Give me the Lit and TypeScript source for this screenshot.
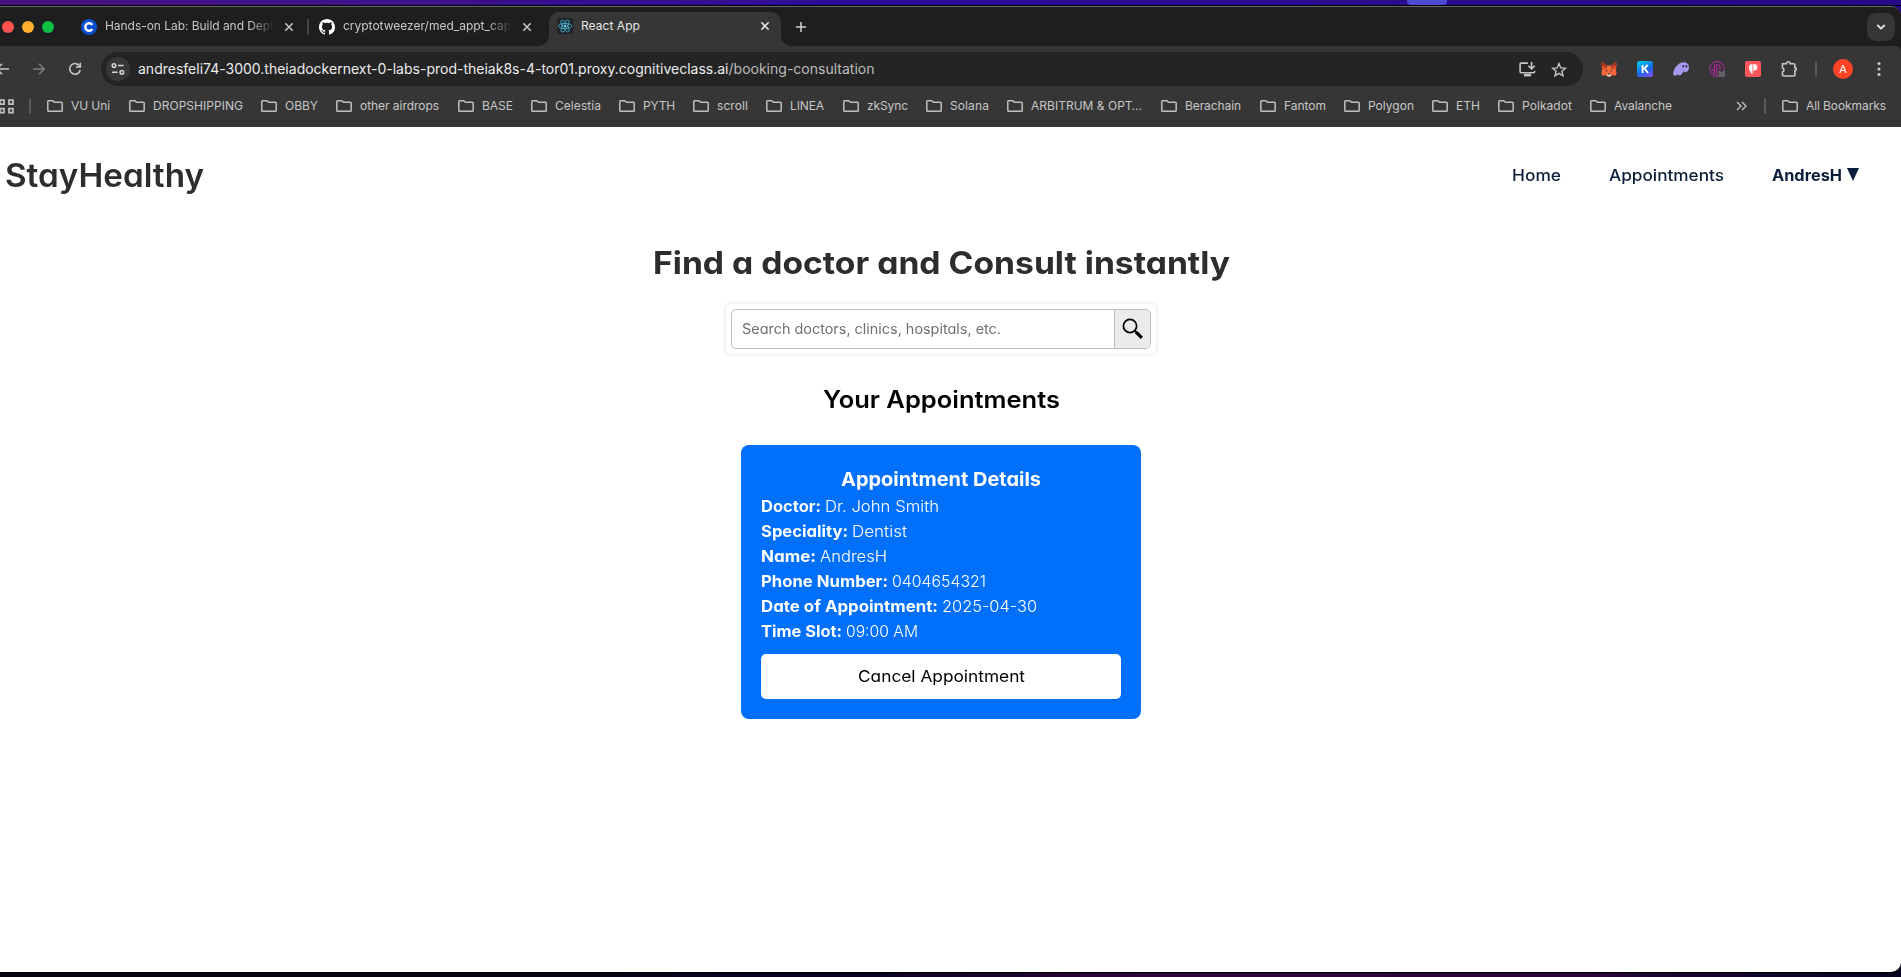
import { LitElement, html, css } from "lit";
import { customElement, property } from "lit/decorators.js";

/** One line of text fitted to an exact width, by tracking or by widening its letters. */
@customElement("fit-text")
class FitText extends LitElement {
  @property({ type: Number }) w = 0;
  @property() text = "";
  @property({ type: Boolean }) stretch = false;
  static styles = css`
    :host { display: inline-block; white-space: pre; flex: none; text-align: left; }
    span { display: inline-block; transform-origin: 0 50%; }
  `;
  render() {
    return html`<span>${this.text}</span>`;
  }
  updated() {
    const span = this.renderRoot.querySelector("span") as HTMLElement;
    span.style.letterSpacing = "0";
    span.style.transform = "none";
    const natural = span.getBoundingClientRect().width;
    const n = [...this.text].length;
    if (this.stretch && natural) span.style.transform = `scaleX(${this.w / natural})`;
    else if (n) span.style.letterSpacing = `${(this.w - natural) / n}px`;
    this.style.width = `${this.w}px`;
  }
}

const t = (text: string, w: number) => html`<fit-text .w=${w} .text=${text}></fit-text>`;
const wide = (text: string, w: number) => html`<fit-text .w=${w} .text=${text} .stretch=${true}></fit-text>`;

const folder = html`<svg class="folder" width="16" height="12" viewBox="0 0 16 12" fill="none">
  <path d="M.8 1.2v9.2q0 .8.8.8h12.8q.8 0 .8-.8V3q0-.8-.8-.8H7.4L5.9.8H1.6Q.8.8.8 1.6z" stroke="#c0c0c0" stroke-width="1.5"/></svg>`;

const cross = (c: string) => html`<svg class="cross" width="10" height="10" viewBox="0 0 10 10">
  <path d="M1.3 1.3l7.4 7.4M8.7 1.3L1.3 8.7" stroke=${c} stroke-width="1.6"/></svg>`;

const bookmarks: [string, number, number][] = [
  ["VU Uni", 39, 82], ["DROPSHIPPING", 90, 132], ["OBBY", 33, 75], ["other airdrops", 79, 122],
  ["BASE", 31, 73], ["Celestia", 46, 88], ["PYTH", 32, 74], ["scroll", 31, 73], ["LINEA", 34, 77],
  ["zkSync", 41, 83], ["Solana", 39, 81], ["ARBITRUM & OPT…", 111, 154], ["Berachain", 56, 99],
  ["Fantom", 42, 84], ["Polygon", 46, 88], ["ETH", 24, 66], ["Polkadot", 50, 92], ["Avalanche", 58, 82],
];

@customElement("browser-chrome")
class BrowserChrome extends LitElement {
  static styles = css`
    :host { display: block; font-family: Inter, "Liberation Sans", sans-serif; font-size: 12px; color: #c7c7c7; }
    svg { display: block; flex: none; }
    .tabs { height: 39px; background: #1e1e1e; display: flex; align-items: center; box-sizing: border-box; border-top-right-radius: 9px; }
    .lights { display: flex; gap: 8px; margin-left: 2px; width: 79px; flex: none; }
    .light { width: 12px; height: 12px; border-radius: 50%; }
    .red { background: #ff544d; } .amber { background: #ffb02e; } .green { background: #0dc143; }
    .tab { display: flex; align-items: center; flex: none; height: 100%; line-height: 16px; }
    .tab .label { margin-left: 8px; flex: none; padding-bottom: 1px; }
    .first { width: 225px; } .second { width: 230px; }
    .fade { width: 168px; -webkit-mask: linear-gradient(90deg, #000 86%, transparent 101%); mask: linear-gradient(90deg, #000 86%, transparent 101%); overflow: hidden; }
    .tab .cross { margin-left: 11px; }
    .divider { width: 2px; height: 16px; border-radius: 1px; background: #444; flex: none; }
    .first + .divider { margin: 0 10px 0 1px; }
    .active { position: relative; box-sizing: border-box; width: 232px; height: 34px; align-self: flex-end; background: #363636; border-radius: 10px 10px 0 0; padding: 0 11px 6px 8px; color: #e6e6e6; }
    .active .cross { margin-left: auto; }
    .active::before, .active::after { content: ""; position: absolute; bottom: 0; width: 10px; height: 10px; }
    .active::before { left: -10px; background: radial-gradient(circle at 0 0, #1e1e1e 9.5px, #363636 10px); }
    .active::after { right: -10px; background: radial-gradient(circle at 100% 0, #1e1e1e 9.5px, #363636 10px); }
    .plus { margin-left: 15px; }
    .chev { width: 28px; height: 28px; border-radius: 9px; background: #363636; margin: 0 6px 0 auto; display: flex; align-items: center; justify-content: center; }
    .tools { height: 46px; background: #363636; display: flex; align-items: center; border-top-right-radius: 5px; }
    .back { margin-left: -5px; } .fwd { margin-left: 24px; } .reload { margin-left: 23px; }
    .omni { margin-left: 19px; width: 1482px; height: 34px; border-radius: 17px; background: #242424; display: flex; align-items: center; flex: none; font-size: 14px; line-height: 20px; box-sizing: border-box; padding: 0 16px 0 5px; }
    .site { width: 24px; height: 24px; border-radius: 50%; background: #383838; display: flex; align-items: center; justify-content: center; margin-right: 8px; }
    .host { color: #ececec; }
    .path { color: #bdbdbd; }
    .install { margin-left: auto; margin-right: 15px; }
    .exts { display: flex; gap: 20px; margin-left: 18px; }
    .tools .divider { margin: 0 16px 0 18px; background: #5a5a5a; }
    .avatar { width: 20px; height: 20px; border-radius: 50%; background: #ff4426; color: #fff; font-size: 11px; line-height: 20px; text-align: center; flex: none; }
    .menu { margin-left: 24px; }
    .marks { height: 35px; padding-bottom: 7px; background: #363636; display: flex; align-items: center; box-sizing: border-box; line-height: 16px; }
    .grid { margin-left: -2px; }
    .marks .divider { background: #5a5a5a; margin: 0 16px 0 15px; }
    .mark { display: flex; align-items: center; gap: 8px; flex: none; }
    .more { margin-left: 64px; }
    .marks .more + .divider { margin: 0 16px 0 17px; }
  `;
  render() {
    return html`
      <div class="tabs">
        <div class="lights"><i class="light red"></i><i class="light amber"></i><i class="light green"></i></div>
        <div class="tab first">
          <svg width="16" height="16" viewBox="0 0 16 16"><circle cx="8" cy="8" r="8" fill="#0a4fd0"/><path d="M11.3 5.9A3.8 3.8 0 1 0 11.3 10.1" fill="none" stroke="#fff" stroke-width="2.4"/></svg>
          <span class="label fade">${t("Hands-on Lab: Build and Depl", 168)}</span>${cross("#c4c4c4")}
        </div>
        <div class="divider"></div>
        <div class="tab second">
          <svg width="16" height="16" viewBox="0 0 16 16"><path fill="#fff" d="M8 0C3.58 0 0 3.58 0 8c0 3.54 2.29 6.53 5.47 7.59.4.07.55-.17.55-.38 0-.19-.01-.82-.01-1.49-2.01.37-2.53-.49-2.69-.94-.09-.23-.48-.94-.82-1.13-.28-.15-.68-.52-.01-.53.63-.01 1.08.58 1.23.82.72 1.21 1.87.87 2.33.66.07-.52.28-.87.51-1.07-1.78-.2-3.64-.89-3.64-3.95 0-.87.31-1.59.82-2.15-.08-.2-.36-1.02.08-2.12 0 0 .67-.21 2.2.82.64-.18 1.32-.27 2-.27s1.36.09 2 .27c1.53-1.04 2.2-.82 2.2-.82.44 1.1.16 1.92.08 2.12.51.56.82 1.27.82 2.15 0 3.07-1.87 3.75-3.65 3.95.29.25.54.73.54 1.48 0 1.07-.01 1.93-.01 2.2 0 .21.15.46.55.38A8.01 8.01 0 0 0 16 8c0-4.42-3.58-8-8-8z"/></svg>
          <span class="label fade">${t("cryptotweezer/med_appt_cap", 168)}</span>${cross("#c4c4c4")}
        </div>
        <div class="tab active">
          <svg width="16" height="16" viewBox="0 0 16 16"><rect width="16" height="16" rx="2" fill="#20232a"/>
            <g fill="none" stroke="#46b5cb" stroke-width=".8"><ellipse cx="8" cy="8" rx="6.8" ry="2.6"/><ellipse cx="8" cy="8" rx="6.8" ry="2.6" transform="rotate(60 8 8)"/><ellipse cx="8" cy="8" rx="6.8" ry="2.6" transform="rotate(120 8 8)"/></g><circle cx="8" cy="8" r="1.5" fill="#5bd3ea"/></svg>
          <span class="label">${t("React App", 59)}</span>${cross("#e0e0e0")}
        </div>
        <svg class="plus" width="10" height="10" viewBox="0 0 10 10"><path d="M5 0v10M0 5h10" stroke="#d0d0d0" stroke-width="1.5"/></svg>
        <div class="chev"><svg width="10" height="6" viewBox="0 0 10 6"><path d="M1.3 1L5 4.6 8.7 1" fill="none" stroke="#e8e8e8" stroke-width="1.8"/></svg></div>
      </div>
      <div class="tools">
        <svg class="back" width="14" height="12" viewBox="0 0 14 12"><path d="M14 6H2M7 .8L1.8 6 7 11.2" fill="none" stroke="#c7c7c7" stroke-width="1.6"/></svg>
        <svg class="fwd" width="12" height="12" viewBox="0 0 12 12"><path d="M0 6h11M6 .8L11.2 6 6 11.2" fill="none" stroke="#7c7c7c" stroke-width="1.5"/></svg>
        <svg class="reload" width="14" height="14" viewBox="0 0 14 14"><path d="M11.6 4.200A5.300 5.300 0 1 0 12.200 8" fill="none" stroke="#c7c7c7" stroke-width="1.6"/><path d="M12.300 .8V5H8" fill="none" stroke="#c7c7c7" stroke-width="1.6"/></svg>
        <div class="omni">
          <div class="site"><svg width="14" height="12" viewBox="0 0 14 12" fill="none" stroke="#d6d6d6" stroke-width="1.5"><circle cx="3" cy="2.6" r="1.8"/><path d="M7 2.6h5.6M1 9.2h5.6"/><circle cx="10.8" cy="9.2" r="1.8"/></svg></div>
          <span class="host">${t("andresfeli74-3000.theiadockernext-0-labs-prod-theiak8s-4-tor01.proxy.cognitiveclass.ai", 590.5)}</span><span class="path">${t("/booking-consultation", 146)}</span>
          <svg class="install" width="17" height="15" viewBox="0 0 17 15" fill="none" stroke="#c7c7c7" stroke-width="1.6"><path d="M8.8 1.1H2.2q-1.1 0-1.1 1v7.6q0 1 1.1 1h12.3q1.1 0 1.1-1V9M12.6 0v6.4M9.4 3.8l3.2 3.1 3.2-3.1"/><path d="M5 13.2h7" stroke-width="2.4"/></svg>
          <svg width="16" height="15" viewBox="0 0 16 15"><path d="M8 1.6l1.8 4.3 4.6.4-3.5 3 1.1 4.5L8 11.4l-4 2.4 1.1-4.5-3.5-3 4.6-.4z" fill="none" stroke="#c7c7c7" stroke-width="1.4"/></svg>
        </div>
        <div class="exts">
          <svg width="16" height="16" viewBox="0 0 16 16"><path d="M.8.7l5.6 3.8h3.2L15.2.7l.2 4.6-.7 3.4 1 3-1 3-3-.8L9.6 15.6H6.4L4.3 13.9l-3 .8-1-3 1-3L.6 5.3z" fill="#f5683a"/><path d="M.8.7l5.6 3.8L5.2 8 .6 5.3zM15.2.7L9.6 4.5 10.8 8l4.600-2.700z" fill="#9c3420"/><path d="M1 5.200l2.200-.6L5.400 7 1.500 8.500zM15 5.200l-2.200-.6L10.600 7l3.900 1.500z" fill="#d94a26"/><path d="M4.600 9l2.200.6-1.400.8zM11.400 9l-2.200.6 1.400.8z" fill="#3b2a35"/><path d="M6.4 13h3.200l.5 1.500-.9 1.100H6.800l-.9-1.100z" fill="#e5cfc4"/><path d="M6.900 12.500h2.200l.2.900h-2.600z" fill="#33313f"/></svg>
          <svg width="16" height="16" viewBox="0 0 16 16"><defs><linearGradient id="k" x1="0.300" y1="0" x2=".8" y2="1"><stop offset="0" stop-color="#04c5ee"/><stop offset=".55" stop-color="#1667e8"/><stop offset="1" stop-color="#7a52ff"/></linearGradient></defs><rect width="16" height="16" rx="2.5" fill="url(#k)"/><path d="M5.600 4v8M10.800 4L6.400 8.300M7.600 7.400l3.400 4.600" stroke="#fff" stroke-width="1.800"/></svg>
          <svg width="16" height="16" viewBox="0 0 16 16"><path d="M.2 13C.5 7 5.3 1.4 10.6 1.2c3.3 0 5.4 2 5.4 5 0 2.700-1.700 5-3.900 5-.9 0-1.300-.4-1.600-.9-.8 1.600-2.200 4.100-3.900 4.100-1 0-1.300-.5-1.400-1.100-.8.8-1.700 1.300-2.600 1.300C1 14.600.2 14.200.2 13z" fill="#a698ec"/><ellipse cx="10.300" cy="5.300" rx=".9" ry="1.300" fill="#2f2b4d"/><ellipse cx="13.400" cy="5.300" rx=".9" ry="1.300" fill="#2f2b4d"/></svg>
          <svg width="16" height="16" viewBox="0 0 16 16"><circle cx="8" cy="8" r="7.400" fill="none" stroke="#9b2a94" stroke-width="1.100"/><path d="M1.500 9.200h3.400M5.400 12.600V4.200h4.400q1.200 0 1.200 1.600v3.400M7.600 14.500V6.800h1.700M3.500 12.200h2" fill="none" stroke="#b0279b" stroke-width="1.200"/><path d="M9.500 9l2 1.400h2.300L16 9v7H9.500z" fill="#625f68"/></svg>
          <svg width="16" height="16" viewBox="0 0 16 16"><rect width="16" height="16" rx="2" fill="#fd565b"/><path d="M4 5.500Q4.500 3 7.500 3v10Q5.500 12.500 5.500 10.500 4 10 4 5.500z" fill="#fff"/><path d="M8.300 3q4 0 4 3.200 0 3.600-4 3.600z" fill="#fff"/></svg>
          <svg width="16" height="16" viewBox="0 0 16 16"><path d="M1.500 2.700H5.400a1.900 1.900 0 0 1 3.800 0H12.900q1 0 1 1V6.600a1.500 1.500 0 0 1 0 3V14q0 1-1 1H2.500q-1 0-1-1V10.800a1.900 1.900 0 0 0 0-3.700z" fill="none" stroke="#c7c7c7" stroke-width="1.600"/></svg>
        </div>
        <div class="divider"></div>
        <div class="avatar">A</div>
        <svg class="menu" width="4" height="16" viewBox="0 0 4 16" fill="#c7c7c7"><circle cx="2" cy="2.500" r="1.600"/><circle cx="2" cy="8" r="1.600"/><circle cx="2" cy="13.500" r="1.600"/></svg>
      </div>
      <div class="marks">
        <svg class="grid" width="16" height="15" viewBox="0 0 16 15" fill="none" stroke="#c0c0c0" stroke-width="1.700"><path d="M2 1.200h4v4h-4zM11 1.200h4v4h-4zM2 9.700h4v4h-4zM11 9.700h4v4h-4z"/></svg>
        <div class="divider"></div>
        ${bookmarks.map(([name, w, full]) => html`<div class="mark" style="width:${full}px">${folder}${t(name, w)}</div>`)}
        <svg class="more" width="11" height="10" viewBox="0 0 11 10"><path d="M1 1l4 4-4 4M6 1l4 4-4 4" fill="none" stroke="#c0c0c0" stroke-width="1.400"/></svg>
        <div class="divider"></div>
        <div class="mark">${folder}${t("All Bookmarks", 80)}</div>
      </div>`;
  }
}

const details: [string, number, string, number][] = [
  ["Doctor:", 60, "Dr. John Smith", 114],
  ["Speciality:", 87, "Dentist", 55],
  ["Name:", 55, "AndresH", 67],
  ["Phone Number:", 127, "0404654321", 94],
  ["Date of Appointment:", 177, "2025-04-30", 95],
  ["Time Slot:", 81, "09:00 AM", 72],
];

@customElement("booking-page")
class BookingPage extends LitElement {
  static styles = css`
    :host { display: flex; flex-direction: column; flex: 1; font-family: Inter, "Liberation Sans", sans-serif; font-feature-settings: "cv11"; background: #fff; border-bottom-right-radius: 10px; font-size: 16px; color: #000; }
    svg { display: block; }
    header { height: 96px; display: flex; align-items: center; padding: 0 42px 0 5px; }
    .logo { font-size: 32px; font-weight: 600; color: #2d2d2d; line-height: 40px; padding-top: 1px; }
    nav { margin-left: auto; display: flex; align-items: center; gap: 48px; color: #0b1f3a; line-height: 24px; font-weight: 500; }
    .user { display: flex; align-items: center; gap: 5px; font-weight: 700; }
    .user svg { margin-bottom: 1px; }
    main { display: flex; flex-direction: column; align-items: center; padding-right: 19px; }
    h1 { margin: 20px 0 0; font-size: 31.500px; line-height: 40px; font-weight: 700; color: #2d2d2d; }
    .search { margin-top: 21px; padding: 5px; border-radius: 5px; box-shadow: 0 0 4px rgba(0,0,0,.13); display: flex; }
    .box { display: flex; width: 420px; height: 40px; box-sizing: border-box; border: 1px solid #bcbcbc; border-radius: 5px; overflow: hidden; }
    .field { flex: 1; padding-left: 10px; font-size: 14px; line-height: 37px; color: #6f6f6f; }
    .go { width: 36px; box-sizing: border-box; border-left: 1px solid #bcbcbc; background: #ebebeb; display: flex; align-items: center; justify-content: center; }
    h2 { margin: 31px 0 0; font-size: 24px; line-height: 30px; font-weight: 600; }
    .card { margin-top: 30px; width: 400px; height: 274px; box-sizing: border-box; padding: 22px 20px 20px; border-radius: 8px; background: #0070fb; color: #fff; }
    h3 { margin: 0 0 1px; font-size: 18.700px; line-height: 26px; font-weight: 700; text-align: center; }
    .row { display: flex; gap: 4px; line-height: 25px; font-weight: 300; }
    .row b { font-weight: 700; }
    .cancel { margin-top: 10px; height: 45px; border-radius: 5px; background: #fff; color: #000; text-align: center; line-height: 45px; }
  `;
  render() {
    return html`
      <header>
        <div class="logo">${wide("StayHealthy", 199)}</div>
        <nav>
          ${wide("Home", 49)}${wide("Appointments", 115)}
          <div class="user">${wide("AndresH", 70)}<svg width="12" height="13" viewBox="0 0 12 13"><path d="M0 0h12L6 13z" fill="#0b1f3a"/></svg></div>
        </nav>
      </header>
      <main>
        <h1>${wide("Find a doctor and Consult instantly", 577)}</h1>
        <div class="search"><div class="box">
          <div class="field">${wide("Search doctors, clinics, hospitals, etc.", 259)}</div>
          <div class="go"><svg width="22" height="22" viewBox="0 0 22 22"><circle cx="8" cy="8" r="6.600" fill="none" stroke="#000" stroke-width="1.700"/><path d="M12.600 12.600l1.600 1.600" stroke="#000" stroke-width="2"/><path d="M14 14l5.800 5.800" stroke="#000" stroke-width="3.200"/></svg></div>
        </div></div>
        <h2>${wide("Your Appointments", 237)}</h2>
        <section class="card">
          <h3>${wide("Appointment Details", 200)}</h3>
          ${details.map(([k, kw, v, vw]) => html`<div class="row"><b>${wide(k, kw)}</b>${wide(v, vw)}</div>`)}
          <div class="cancel">${wide("Cancel Appointment", 167)}</div>
        </section>
      </main>`;
  }
}

@customElement("app-root")
class AppRoot extends LitElement {
  static styles = css`
    :host { display: flex; flex-direction: column; box-sizing: border-box; width: 1901px; height: 977px; overflow: hidden; background: linear-gradient(90deg, #06020f 0 20%, #0a0220 45%, #2c0638 60%, #2a0636 82%, #10052a 93%, #090220); }
    .desk { height: 5px; flex: none; display: flex; background: linear-gradient(90deg, #46107f, #3a108c 25%, #2d0d97 45%, #260a86); }
    .pill { width: 40px; height: 5px; margin-left: 1407px; background: #4c4bd2; border-radius: 0 0 4px 4px; }
    .top { flex: none; background: #260a86; }
    .window { display: flex; flex-direction: column; height: 968px; flex: none; box-sizing: border-box; border-top: 1px solid #000; border-bottom: 1px solid #000; border-radius: 0 0 11px 0; }
    .edge { border-top: 1px solid #6a6a6a; border-top-right-radius: 10px; background: #1e1e1e; }
  `;
  render() {
    return html`
      <div class="desk"><div class="pill"></div></div>
      <div class="window"><div class="top"><div class="edge"><browser-chrome></browser-chrome></div></div><booking-page></booking-page></div>`;
  }
}
